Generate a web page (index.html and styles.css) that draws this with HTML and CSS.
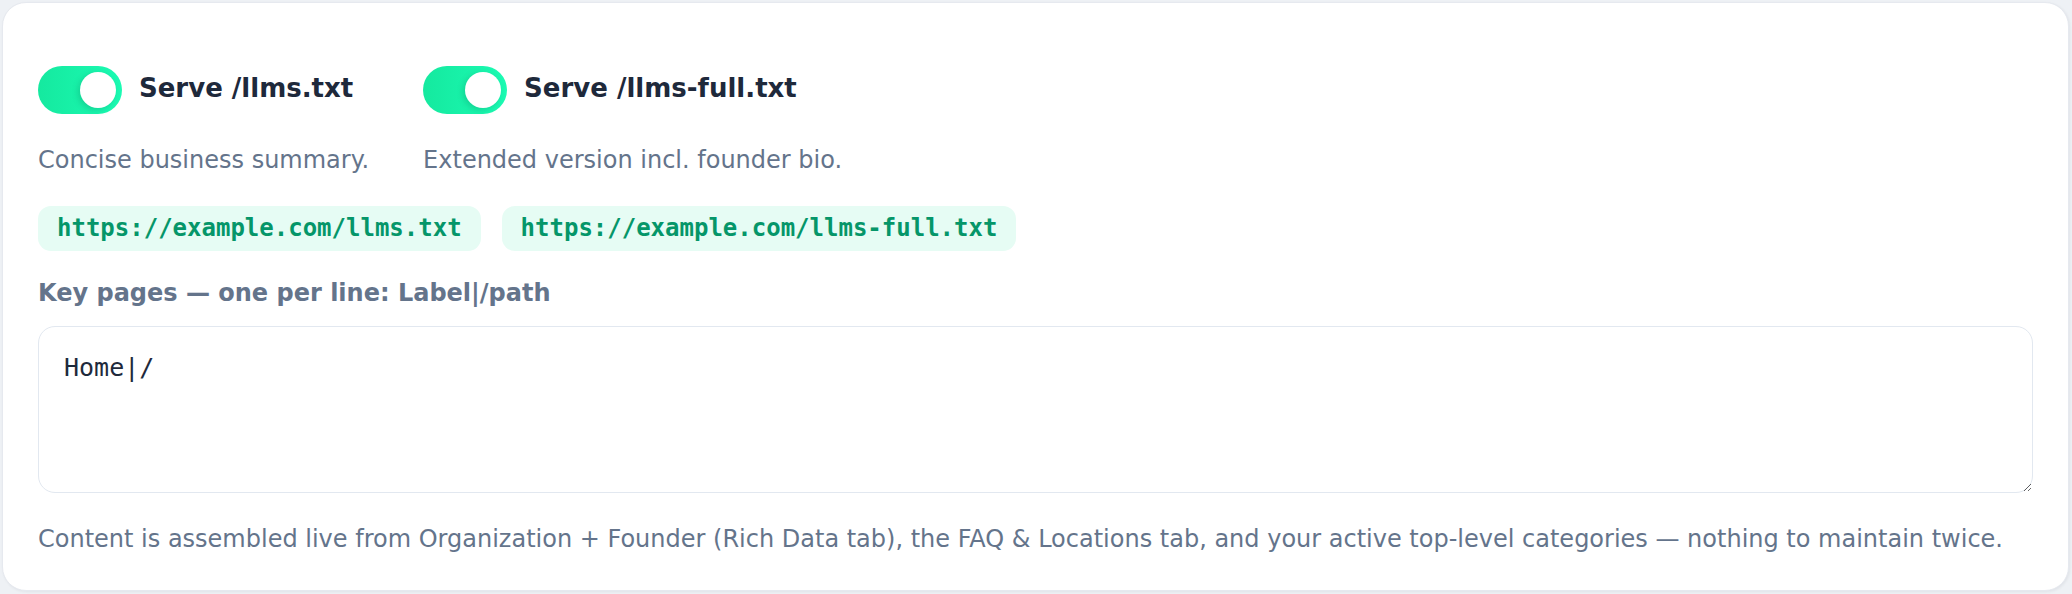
FILE: index.html
```html
<!DOCTYPE html>
<html lang="en">
<head>
<meta charset="utf-8">
<title>llms.txt settings</title>
<link rel="stylesheet" href="styles.css">
</head>
<body>
<div class="card">
  <div class="toggles">
    <div class="col">
      <div class="toggle-row">
        <span class="switch"><span class="knob"></span></span>
        <span class="label">Serve /llms.txt</span>
      </div>
      <p class="desc">Concise business summary.</p>
    </div>
    <div class="col">
      <div class="toggle-row">
        <span class="switch"><span class="knob"></span></span>
        <span class="label">Serve /llms-full.txt</span>
      </div>
      <p class="desc">Extended version incl. founder bio.</p>
    </div>
  </div>
  <div class="chips">
    <code class="chip">https://example.com/llms.txt</code>
    <code class="chip">https://example.com/llms-full.txt</code>
  </div>
  <label class="field-label" for="pages">Key pages — one per line: Label|/path</label>
  <textarea id="pages" class="pages">Home|/</textarea>
  <p class="foot">Content is assembled live from Organization + Founder (Rich Data tab), the FAQ &amp; Locations tab, and your active top-level categories — nothing to maintain twice.</p>
</div>
</body>
</html>
```
FILE: styles.css
```css
* { box-sizing: border-box; }
html, body { margin: 0; }
body {
  background: #eef1f5;
  padding: 2px 3px 3px 2px;
  font-family: "DejaVu Sans", sans-serif;
}
.card {
  background: #fff;
  border: 1px solid #e6e9ef;
  border-radius: 24px;
  box-shadow: 1px 1px 3px rgba(15, 23, 42, 0.06);
  height: 589px;
  padding: 63px 35px 0 35px;
  display: flex;
  flex-direction: column;
}
.toggles {
  display: flex;
  gap: 54px;
}
.col {
  display: flex;
  flex-direction: column;
}
.toggle-row {
  display: flex;
  align-items: center;
  gap: 17px;
  height: 48px;
}
.switch {
  width: 84px;
  height: 48px;
  border-radius: 24px;
  background: linear-gradient(90deg, #15e99f, #1bfbb3);
  display: flex;
  align-items: center;
  justify-content: flex-end;
  padding: 0 6px;
}
.knob {
  width: 36px;
  height: 36px;
  border-radius: 50%;
  background: #fff;
  box-shadow: -2px 2px 6px rgba(6, 95, 70, 0.22);
}
.label {
  font-weight: 700;
  font-size: 26px;
  color: #1e293b;
  margin-top: -4px;
}
.desc {
  margin: 28px 0 0;
  font-size: 24px;
  line-height: 36px;
  color: #64748b;
}
.chips {
  display: flex;
  gap: 21px;
  margin-top: 28px;
}
.chip {
  background: #e6fcf4;
  color: #059669;
  font-family: "DejaVu Sans Mono", monospace;
  font-weight: 700;
  font-size: 24px;
  line-height: 29px;
  padding: 8px 19px;
  border-radius: 13px;
}
.field-label {
  display: block;
  margin-top: 24px;
  font-weight: 700;
  font-size: 24px;
  line-height: 36px;
  color: #64748b;
}
.pages {
  display: block;
  width: 100%;
  height: 167px;
  margin-top: 15px;
  border: 1.5px solid #e2e8f0;
  border-radius: 17px;
  padding: 22px 25px;
  font-family: "DejaVu Sans Mono", monospace;
  font-size: 25px;
  line-height: 37px;
  color: #1e293b;
  resize: vertical;
  outline: none;
}
.foot {
  margin: 28px 0 0;
  font-size: 24px;
  line-height: 36px;
  color: #64748b;
}
```
